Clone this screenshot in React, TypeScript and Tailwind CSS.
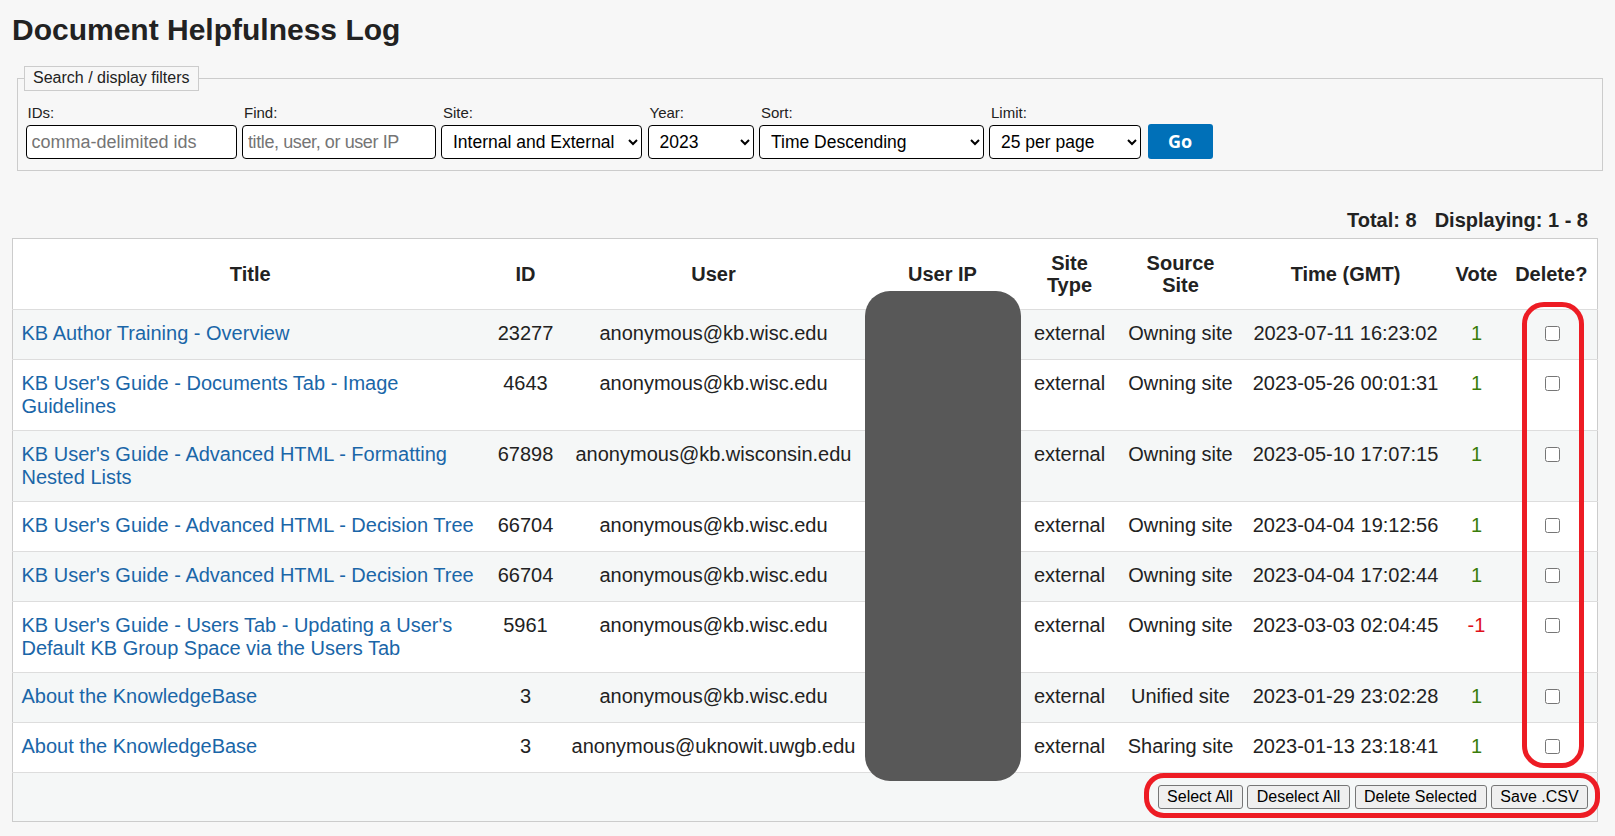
const rows = [
  { title: 'KB Author Training - Overview', id: '23277', user: 'anonymous@kb.wisc.edu', source: 'Owning site', time: '2023-07-11 16:23:02', vote: '1' },
  { title: "KB User's Guide - Documents Tab - Image Guidelines", id: '4643', user: 'anonymous@kb.wisc.edu', source: 'Owning site', time: '2023-05-26 00:01:31', vote: '1' },
  { title: "KB User's Guide - Advanced HTML - Formatting Nested Lists", id: '67898', user: 'anonymous@kb.wisconsin.edu', source: 'Owning site', time: '2023-05-10 17:07:15', vote: '1' },
  { title: "KB User's Guide - Advanced HTML - Decision Tree", id: '66704', user: 'anonymous@kb.wisc.edu', source: 'Owning site', time: '2023-04-04 19:12:56', vote: '1' },
  { title: "KB User's Guide - Advanced HTML - Decision Tree", id: '66704', user: 'anonymous@kb.wisc.edu', source: 'Owning site', time: '2023-04-04 17:02:44', vote: '1' },
  { title: "KB User's Guide - Users Tab - Updating a User's Default KB Group Space via the Users Tab", id: '5961', user: 'anonymous@kb.wisc.edu', source: 'Owning site', time: '2023-03-03 02:04:45', vote: '-1' },
  { title: 'About the KnowledgeBase', id: '3', user: 'anonymous@kb.wisc.edu', source: 'Unified site', time: '2023-01-29 23:02:28', vote: '1' },
  { title: 'About the KnowledgeBase', id: '3', user: 'anonymous@uknowit.uwgb.edu', source: 'Sharing site', time: '2023-01-13 23:18:41', vote: '1' },
];

const selectClass = 'h-[34px] bg-white border border-black rounded-[4px] text-[17.5px] text-black pl-[7px]';
const inputClass = 'h-[34px] bg-white border border-black rounded-[4px] px-[5px] pt-[1px] text-[18px] placeholder:text-[#757575]';
const buttonClass = 'h-[24px] bg-[#efefef] border border-[#767676] rounded-[3px] text-[16px] text-black flex items-center justify-center';
const cellClass = 'pt-[12px] pb-[13px] align-top text-center';

function Field({ label, children }: { label: string; children: React.ReactNode }) {
  return (
    <div className="flex flex-col">
      <label className="text-[15px] leading-[16px] text-[#222] pl-[2px] mb-[4px]">{label}</label>
      {children}
    </div>
  );
}

export default function App() {
  return (
    <div className="relative min-h-[836px] bg-[#f7f7f7] font-['Liberation_Sans',Arial,sans-serif] text-[#222] overflow-hidden">
      <h1 className="pl-[12px] pt-[13px] text-[30px] leading-[34px] font-bold text-[#222]">Document Helpfulness Log</h1>

      <fieldset className="mt-[19px] ml-[17px] mr-[13px] w-[1586px] h-[105px] border border-[#ccc] pl-[8px] pr-[8px] box-border">
        <legend className="ml-[-2px] px-[8px] h-[25px] leading-[22px] text-[16px] border border-[#ccc] text-[#222]">Search / display filters</legend>
        <div className="flex items-end gap-[5.5px] mt-[14px] ml-[-0.5px]">
          <Field label="IDs:">
            <input placeholder="comma-delimited ids" className={`${inputClass} w-[211px]`} />
          </Field>
          <Field label="Find:">
            <input placeholder="title, user, or user IP" className={`${inputClass} w-[193.5px] tracking-[-0.4px]`} />
          </Field>
          <Field label="Site:">
            <select className={`${selectClass} w-[201px]`} defaultValue="Internal and External">
              <option>Internal and External</option>
            </select>
          </Field>
          <Field label="Year:">
            <select className={`${selectClass} w-[106px]`} defaultValue="2023">
              <option>2023</option>
            </select>
          </Field>
          <Field label="Sort:">
            <select className={`${selectClass} w-[224.5px]`} defaultValue="Time Descending">
              <option>Time Descending</option>
            </select>
          </Field>
          <Field label="Limit:">
            <select className={`${selectClass} w-[152px]`} defaultValue="25 per page">
              <option>25 per page</option>
            </select>
          </Field>
          <button className="ml-[1px] w-[65px] h-[35px] bg-[#0070b8] rounded-[3px] text-white font-['Open_Sans',sans-serif] font-bold text-[18px]">Go</button>
        </div>
      </fieldset>

      <div className="mt-[37px] mr-[27px] flex justify-end gap-[18px] text-[20px] leading-[24px] font-bold text-[#222]">
        <span>Total: 8</span>
        <span>Displaying: 1 - 8</span>
      </div>

      <table className="mt-[6px] ml-[12px] w-[1585px] table-fixed border-collapse border border-[#ccc] text-[20px] leading-[22.5px]">
        <colgroup>
          <col className="w-[475px]" />
          <col className="w-[76px]" />
          <col className="w-[300px]" />
          <col className="w-[158px]" />
          <col className="w-[96px]" />
          <col className="w-[126px]" />
          <col className="w-[204px]" />
          <col className="w-[58px]" />
          <col className="w-[92px]" />
        </colgroup>
        <thead>
          <tr className="h-[71px] bg-white font-bold">
            <th className="font-bold">Title</th>
            <th className="font-bold">ID</th>
            <th className="font-bold">User</th>
            <th className="font-bold">User IP</th>
            <th className="font-bold">Site<br />Type</th>
            <th className="font-bold">Source<br />Site</th>
            <th className="font-bold">Time (GMT)</th>
            <th className="font-bold">Vote</th>
            <th className="font-bold">Delete?</th>
          </tr>
        </thead>
        <tbody>
          {rows.map((r, i) => (
            <tr key={i} className={`h-[50px] border-t border-[#ddd] ${i % 2 === 0 ? 'bg-[#f5f7f7]' : 'bg-white'}`}>
              <td className="pl-[8.5px] pr-[10px] pt-[12px] pb-[13px] align-top text-[#1a66a8]">{r.title}</td>
              <td className={cellClass}>{r.id}</td>
              <td className={`${cellClass} whitespace-nowrap`}>{r.user}</td>
              <td></td>
              <td className={cellClass}>external</td>
              <td className={cellClass}>{r.source}</td>
              <td className={cellClass}>{r.time}</td>
              <td className={`${cellClass} ${r.vote === '1' ? 'text-[#3a7d0a]' : 'text-[#e0101c]'}`}>{r.vote}</td>
              <td className="pt-[16px] pb-[13px] pl-[2px] align-top text-center leading-[0px]">
                <input type="checkbox" className="w-[15px] h-[15px] m-0" />
              </td>
            </tr>
          ))}
          <tr className="h-[49px] border-t border-[#ddd] bg-[#f5f7f7]">
            <td colSpan={9} className="pr-[9px]">
              <div className="flex justify-end gap-[4.5px]">
                <button className={`${buttonClass} w-[85px]`}>Select All</button>
                <button className={`${buttonClass} w-[103px]`}>Deselect All</button>
                <button className={`${buttonClass} w-[132px]`}>Delete Selected</button>
                <button className={`${buttonClass} w-[97px]`}>Save .CSV</button>
              </div>
            </td>
          </tr>
        </tbody>
      </table>

      {/* redaction + red callouts sit on top of the table */}
      <div className="absolute left-[865px] top-[291px] w-[156px] h-[490px] rounded-[25px] bg-[#585858]"></div>
      <div className="absolute left-[1522px] top-[302px] w-[62px] h-[466px] rounded-[22px] border-[5px] border-[#ed1c24]"></div>
      <div className="absolute left-[1144px] top-[773px] w-[456px] h-[45px] rounded-[20px] border-[5px] border-[#ed1c24]"></div>
    </div>
  );
}
